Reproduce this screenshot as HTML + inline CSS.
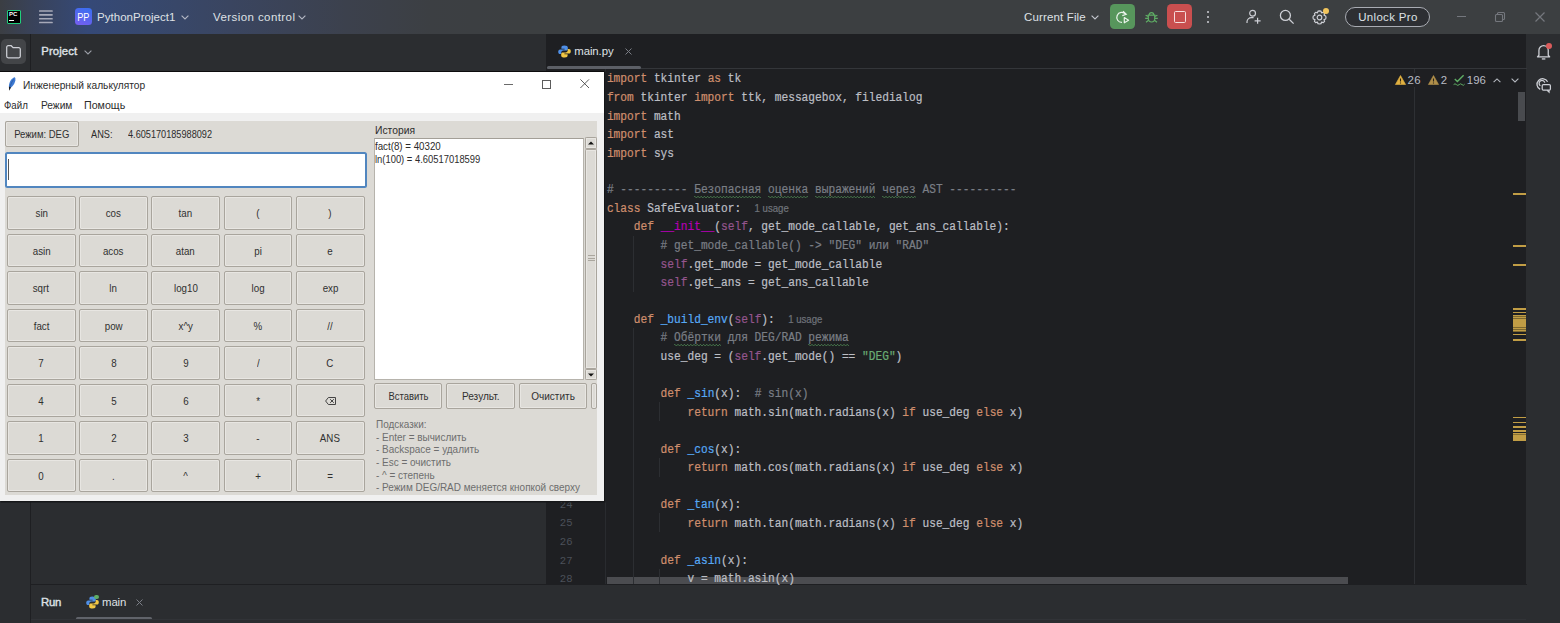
<!DOCTYPE html>
<html><head><meta charset="utf-8">
<style>
*{box-sizing:border-box;margin:0;padding:0}
html,body{width:1560px;height:623px;overflow:hidden;background:#2b2d30}
body{position:relative;font-family:"Liberation Sans",sans-serif;color:#dfe1e5}
.abs{position:absolute}
svg{position:absolute;overflow:visible}
/* ---------- IDE chrome ---------- */
#titlebar{left:0;top:0;width:1560px;height:34px;background:linear-gradient(90deg,#3b3e43 0px,#394258 30px,#354977 88px,#37486d 150px,#3a4560 230px,#3c414d 346px,#3c3f43 430px,#3c3f41 520px,#3c3f41 1560px)}
.tt{position:absolute;white-space:nowrap;font-size:12.4px;color:#dfe1e5;line-height:16px}
#leftstrip{left:0;top:34px;width:30px;height:589px;background:#2b2d30}
#leftsep{left:30px;top:34px;width:1px;height:589px;background:#1e1f22}
#project{left:31px;top:34px;width:516px;height:551px;background:#2b2d30}
#editor{left:546px;top:34px;width:980px;height:551px;background:#1e1f22}
#rightstrip{left:1526px;top:34px;width:34px;height:589px;background:#2b2d30}
#bottom{left:31px;top:584px;width:1496px;height:39px;background:#2b2d30;border-top:1px solid #1e1f22}
/* ---------- code ---------- */
#code{left:606.9px;top:69.9px;font-family:"Liberation Mono",monospace;font-size:11.19px;line-height:16.39px;color:#bcbec4;white-space:pre;transform:scale(1,1.13);transform-origin:0 0;-webkit-text-stroke:0.2px}
#code div{height:16.39px}
.k{color:#cf8e6d}.c{color:#7a7e85}.s{color:#6aab73}.f{color:#56a8f5}.sf{color:#94558d}.d{color:#b200b2}
.h{font-family:"Liberation Sans",sans-serif;font-size:9.6px;color:#6f737a}
.w{position:relative;display:inline-block}.wv{position:absolute;left:0;top:12.9px;width:100%;height:3px;overflow:hidden}
.ln{position:absolute;left:546px;width:26.5px;text-align:right;font-family:"Liberation Mono",monospace;font-size:10.6px;color:#4b5059;line-height:18.52px;height:18.52px}
.guide{position:absolute;width:1px;background:#2c2e32}
.mk{position:absolute;left:1513px;width:13px;height:2px;background:#c19d45}
</style></head><body>
<!--IDE-->
<div id="titlebar" class="abs"></div>
<div id="leftstrip" class="abs"></div>
<div id="leftsep" class="abs"></div>
<div id="project" class="abs"></div>
<div id="editor" class="abs"></div>
<div id="rightstrip" class="abs"></div>
<div id="bottom" class="abs"></div>
<!-- PyCharm logo -->
<div class="abs" style="left:6.7px;top:9.8px;width:13.9px;height:14.1px;background:#000;border:1.3px solid #20cf7c;border-radius:1px"></div>
<div class="abs" style="left:9.1px;top:11.3px;font-size:6px;font-weight:700;color:#fff;line-height:7px;letter-spacing:-0.2px">PC</div>
<div class="abs" style="left:9.2px;top:20px;width:4.4px;height:1.2px;background:#fff"></div>
<!-- hamburger -->
<svg style="left:39.3px;top:10px" width="14" height="14" viewBox="0 0 14 14"><g fill="#a6a9b8"><rect x="0" y="0.25" width="13.8" height="1.55" rx="0.6"/><rect x="0" y="4.1" width="13.8" height="1.55" rx="0.6"/><rect x="0" y="8.0" width="13.8" height="1.55" rx="0.6"/><rect x="0" y="11.7" width="13.8" height="1.55" rx="0.6"/></g></svg>
<!-- PP badge -->
<div class="abs" style="left:75px;top:8.2px;width:16.5px;height:16.8px;border-radius:3.5px;background:linear-gradient(200deg,#3a6ff2 5%,#5865ee 55%,#7a5ef0 100%)"></div>
<div class="abs" style="left:75px;top:11.8px;width:16.5px;text-align:center;font-size:10.6px;color:#fff;line-height:11px;letter-spacing:-0.1px;transform:scaleX(0.86)">PP</div>
<div class="tt" style="left:97px;top:9px;font-size:11.5px;letter-spacing:0.03px">PythonProject1</div>
<svg style="left:180.5px;top:14.5px" width="8" height="5" viewBox="0 0 8 5"><path d="M0.6 0.6 L4 4 L7.4 0.6" fill="none" stroke="#b4b8c4" stroke-width="1.1"/></svg>
<div class="tt" style="left:213px;top:9px;font-size:11.5px;letter-spacing:0.42px">Version control</div>
<svg style="left:298px;top:14.5px" width="8" height="5" viewBox="0 0 8 5"><path d="M0.6 0.6 L4 4 L7.4 0.6" fill="none" stroke="#b4b8c4" stroke-width="1.1"/></svg>
<!-- right side -->
<div class="tt" style="left:1024px;top:9px;font-size:11.5px;letter-spacing:0.15px">Current File</div>
<svg style="left:1091px;top:14.5px" width="8" height="5" viewBox="0 0 8 5"><path d="M0.6 0.6 L4 4 L7.4 0.6" fill="none" stroke="#c4c7ce" stroke-width="1.1"/></svg>
<div class="abs" style="left:1109.7px;top:4.2px;width:25.3px;height:25.3px;border-radius:4.5px;background:#57965c"></div>
<svg style="left:1114px;top:9px" width="17" height="16" viewBox="0 0 17 16"><path d="M11.6 5.2 A5 5 0 1 0 8 13.4" fill="none" stroke="#e9f3ea" stroke-width="1.25"/><path d="M9 2.2 L12.2 5.3 L8.3 6.6" fill="none" stroke="#e9f3ea" stroke-width="1.25"/><path d="M10.3 8.6 L14.6 11.2 L10.3 13.8 Z" fill="none" stroke="#e9f3ea" stroke-width="1.2" stroke-linejoin="round"/></svg>
<!-- bug -->
<svg style="left:1143.5px;top:10px" width="15" height="14" viewBox="0 0 15 14"><g fill="none" stroke="#5fad65" stroke-width="1.2"><path d="M4.3 5.2 h6.4 v3.6 a3.2 3.2 0 0 1 -6.4 0 Z"/><path d="M5.2 5 a2.3 2.3 0 0 1 4.6 0"/><path d="M4.3 6.4 L1.6 5.2 M4.3 8.3 H1.2 M4.6 10.3 L2 12.2 M10.7 6.4 L13.4 5.2 M10.7 8.3 H13.8 M10.4 10.3 L13 12.2"/></g></svg>
<!-- stop -->
<div class="abs" style="left:1167.2px;top:4.2px;width:25.2px;height:25.3px;border-radius:4.5px;background:#c94f4f"></div>
<div class="abs" style="left:1174px;top:11px;width:11.6px;height:11.6px;border:1.3px solid #f6dede;border-radius:1.6px"></div>
<!-- dots -->
<div class="abs" style="left:1207px;top:11px;width:2px;height:2px;border-radius:1px;background:#ced0d6"></div>
<div class="abs" style="left:1207px;top:16px;width:2px;height:2px;border-radius:1px;background:#ced0d6"></div>
<div class="abs" style="left:1207px;top:21px;width:2px;height:2px;border-radius:1px;background:#ced0d6"></div>
<!-- add user -->
<svg style="left:1246px;top:8.5px" width="16" height="16" viewBox="0 0 16 16"><g fill="none" stroke="#ced0d6" stroke-width="1.2"><circle cx="6.6" cy="4.2" r="2.9"/><path d="M1 14 v-1.2 a4.4 4.4 0 0 1 4.4 -4.2 h2.2"/><path d="M11.6 8.8 v6 M8.6 11.8 h6"/></g></svg>
<!-- search -->
<svg style="left:1278.6px;top:8.8px" width="16" height="16" viewBox="0 0 16 16"><g fill="none" stroke="#ced0d6" stroke-width="1.3"><circle cx="6.4" cy="6.4" r="5"/><path d="M10.2 10.2 L14.6 14.6"/></g></svg>
<!-- gear -->
<svg style="left:1312px;top:9.8px" width="15" height="15" viewBox="0 0 15 15"><g fill="none" stroke="#ced0d6" stroke-width="1.2"><path d="M7.5 0.9 L9 1.2 L9.6 2.9 L11.3 2.3 L12.6 3.6 L12 5.3 L13.7 6 L14 7.5 L13.7 9 L12 9.6 L12.6 11.3 L11.3 12.6 L9.6 12 L9 13.7 L7.5 14 L6 13.7 L5.4 12 L3.7 12.6 L2.4 11.3 L3 9.6 L1.3 9 L1 7.5 L1.3 6 L3 5.3 L2.4 3.6 L3.7 2.3 L5.4 2.9 L6 1.2 Z" stroke-linejoin="round"/><circle cx="7.5" cy="7.5" r="2.3"/></g></svg>
<div class="abs" style="left:1323px;top:8px;width:5.6px;height:5.6px;border-radius:3px;background:#f2c55c"></div>
<!-- Unlock Pro -->
<div class="abs" style="left:1345.4px;top:6.7px;width:84.4px;height:20.2px;border:1.5px solid #a9acb3;border-radius:10.1px;background:#2d2f33"></div>
<div class="tt" style="left:1358.2px;top:9px;font-size:11.5px;letter-spacing:0.32px;color:#dfe1e5">Unlock Pro</div>
<!-- window controls -->
<div class="abs" style="left:1456.5px;top:16px;width:9px;height:1.2px;background:#74777d"></div>
<svg style="left:1495px;top:12px" width="10" height="10" viewBox="0 0 10 10"><g fill="none" stroke="#74777d" stroke-width="1.1"><rect x="0.5" y="2.5" width="7" height="7" rx="1"/><path d="M2.5 2.5 V1.5 a1 1 0 0 1 1 -1 H8.5 a1 1 0 0 1 1 1 V6.5 a1 1 0 0 1 -1 1 H7.5"/></g></svg>
<svg style="left:1534.6px;top:12px" width="10" height="10" viewBox="0 0 10 10"><path d="M0.5 0.5 L9.5 9.5 M9.5 0.5 L0.5 9.5" fill="none" stroke="#74777d" stroke-width="1.2"/></svg>
<!--TITLEBAR-END-->
<!-- left strip folder tile -->
<div class="abs" style="left:1.2px;top:38.8px;width:25px;height:25px;border-radius:5px;background:#434548"></div>
<svg style="left:6.2px;top:44.6px" width="15" height="14" viewBox="0 0 15 14"><path d="M0.7 2.2 a1.5 1.5 0 0 1 1.5 -1.5 h3 l1.9 2 h5.7 a1.5 1.5 0 0 1 1.5 1.5 v7.1 a1.5 1.5 0 0 1 -1.5 1.5 h-10.6 a1.5 1.5 0 0 1 -1.5 -1.5 Z" fill="none" stroke="#ced0d6" stroke-width="1.25"/></svg>
<!-- Project header -->
<div class="tt" style="left:41.3px;top:43.2px;font-size:11.3px;font-weight:400;-webkit-text-stroke:0.4px;letter-spacing:0.12px;color:#dfe1e5">Project</div>
<svg style="left:83.8px;top:50px" width="8" height="5" viewBox="0 0 8 5"><path d="M0.6 0.6 L4 4 L7.4 0.6" fill="none" stroke="#9da0a8" stroke-width="1.1"/></svg>
<!-- editor tabs -->
<div class="abs" style="left:547px;top:68px;width:980px;height:1px;background:#34363a"></div>
<svg style="left:557.5px;top:44.6px" width="13" height="13" viewBox="0 0 13 13"><path d="M6.3 0.4 c-2.2 0 -2.9 0.9 -2.9 2 v1.4 h3.2 v0.6 h-4.5 c-1.2 0 -1.9 1 -1.9 2.4 c0 1.5 0.7 2.3 1.9 2.3 h1.2 v-1.7 c0 -1.1 0.9 -1.9 2 -1.9 h2.9 c0.9 0 1.6 -0.7 1.6 -1.6 v-1.6 c0 -1.1 -1 -1.9 -3.5 -1.9 Z" fill="#4f8fe6"/><path d="M6.7 12.6 c2.2 0 2.9 -0.9 2.9 -2 v-1.4 h-3.2 v-0.6 h4.5 c1.2 0 1.9 -1 1.9 -2.4 c0 -1.5 -0.7 -2.3 -1.9 -2.3 h-1.2 v1.7 c0 1.1 -0.9 1.9 -2 1.9 h-2.9 c-0.9 0 -1.6 0.7 -1.6 1.6 v1.6 c0 1.1 1 1.9 3.5 1.9 Z" fill="#f2c744"/></svg>
<div class="tt" style="left:574.3px;top:43.3px;font-size:11.4px;letter-spacing:-0.1px;color:#dfe1e5">main.py</div>
<svg style="left:624.5px;top:47.5px" width="7" height="7" viewBox="0 0 7 7"><path d="M0.5 0.5 L6.5 6.5 M6.5 0.5 L0.5 6.5" fill="none" stroke="#7b7e86" stroke-width="1"/></svg>
<div class="abs" style="left:547px;top:65.5px;width:94px;height:3.2px;border-radius:1.6px;background:#5c5f66"></div>
<!-- inspections widget -->
<svg style="left:1395px;top:74.5px" width="11" height="10" viewBox="0 0 11 10"><path d="M5.5 0.5 L10.6 9.5 H0.4 Z" fill="#e0b040" stroke="#e0b040" stroke-width="0.6" stroke-linejoin="round"/><path d="M5.5 3.4 V6.4 M5.5 7.5 V8.4" stroke="#2a2418" stroke-width="1.1"/></svg>
<div class="tt" style="left:1407.6px;top:72.2px;font-size:11.4px;letter-spacing:0.4px;color:#b9bcc4">26</div>
<svg style="left:1428.3px;top:74.5px" width="11" height="10" viewBox="0 0 11 10"><path d="M5.5 0.5 L10.6 9.5 H0.4 Z" fill="#b08f4a" stroke="#b08f4a" stroke-width="0.6" stroke-linejoin="round"/><path d="M5.5 3.4 V6.4 M5.5 7.5 V8.4" stroke="#2a2418" stroke-width="1.1"/></svg>
<div class="tt" style="left:1440.8px;top:72.2px;font-size:11.4px;color:#b9bcc4">2</div>
<svg style="left:1453px;top:74px" width="12" height="12" viewBox="0 0 12 12"><path d="M1.8 5 L4.4 7.6 L10.6 1.2" fill="none" stroke="#5fad65" stroke-width="1.4"/><path d="M0.6 10.6 q1.4 -1.6 2.8 0 t2.8 0 t2.8 0 t2.6 -0.4" fill="none" stroke="#5fad65" stroke-width="1"/></svg>
<div class="tt" style="left:1466.8px;top:72.2px;font-size:11.4px;color:#b9bcc4">196</div>
<svg style="left:1493.3px;top:77.5px" width="8" height="5" viewBox="0 0 8 5"><path d="M0.6 4.2 L4 0.9 L7.4 4.2" fill="none" stroke="#b4b8bf" stroke-width="1.1"/></svg>
<svg style="left:1511.2px;top:77.8px" width="8" height="5" viewBox="0 0 8 5"><path d="M0.6 0.7 L4 4 L7.4 0.7" fill="none" stroke="#b4b8bf" stroke-width="1.1"/></svg>
<!-- margin guide -->
<div class="abs" style="left:1414px;top:87px;width:1px;height:497px;background:#2e3034"></div>
<div class="abs" style="left:1414px;top:69px;width:1px;height:4px;background:#2e3034"></div>
<!-- v scrollbar thumb -->
<div class="abs" style="left:1518px;top:92px;width:7px;height:29px;background:#494b4f"></div>
<!-- error stripe marks -->
<div class="mk" style="top:192.6px"></div><div class="mk" style="top:244.6px"></div><div class="mk" style="top:263.6px"></div>
<div class="mk" style="top:308px;height:1.6px"></div><div class="mk" style="top:311.6px;height:1.6px"></div>
<div class="mk" style="top:315.2px;height:16.6px;background:repeating-linear-gradient(180deg,#c19d45 0px,#c19d45 1.4px,#7d682f 1.4px,#7d682f 2.1px)"></div>
<div class="mk" style="top:333.6px;height:1.8px"></div><div class="mk" style="top:339.2px;height:1.8px"></div>
<div class="mk" style="top:416.8px;height:1.6px"></div><div class="mk" style="top:421.6px;height:1.8px"></div><div class="mk" style="top:425.8px;height:1.8px"></div><div class="mk" style="top:429.8px;height:1.8px"></div>
<div class="mk" style="top:433.4px;height:8px;background:repeating-linear-gradient(180deg,#c19d45 0px,#c19d45 1.5px,#8a7233 1.5px,#8a7233 2.1px)"></div>
<!-- gutter separator + h scrollbar -->
<div class="abs" style="left:604.6px;top:69px;width:1px;height:515px;background:#292b2f"></div>
<div class="abs" style="left:607.3px;top:576.5px;width:741px;height:7.6px;background:rgba(120,122,126,0.5)"></div>
<!-- right strip icons -->
<svg style="left:1535.6px;top:42.6px" width="15.6" height="17.6" viewBox="0 0 15 17"><g fill="none" stroke="#ced0d6" stroke-width="1.25"><path d="M2.8 11.8 V7 a4.5 4.5 0 0 1 9 0 v4.8 l1.4 1.6 H1.4 Z" stroke-linejoin="round"/><path d="M5.6 15.4 h3.4"/></g></svg>
<div class="abs" style="left:1546.2px;top:43.2px;width:6px;height:6px;border-radius:3px;background:#db5c5c"></div>
<svg style="left:1535.4px;top:76.8px" width="17" height="16" viewBox="0 0 17 16"><g fill="none" stroke="#ced0d6" stroke-width="1.25"><path d="M5.2 12.4 a5.6 5.6 0 1 1 7.4 -7.6"/><path d="M5.4 8.8 a2.9 2.9 0 1 1 4.4 -3.2"/><rect x="7.2" y="7.6" width="8.2" height="5.6" rx="1.2"/><path d="M12.2 13.2 l1.8 1.8 v-1.8"/></g></svg>
<!-- Run bar -->
<div class="tt" style="left:41px;top:594.2px;font-size:11.4px;font-weight:400;-webkit-text-stroke:0.4px;letter-spacing:-0.3px">Run</div>
<svg style="left:85.6px;top:595.6px" width="13" height="13" viewBox="0 0 13 13"><path d="M6.3 0.4 c-2.2 0 -2.9 0.9 -2.9 2 v1.4 h3.2 v0.6 h-4.5 c-1.2 0 -1.9 1 -1.9 2.4 c0 1.5 0.7 2.3 1.9 2.3 h1.2 v-1.7 c0 -1.1 0.9 -1.9 2 -1.9 h2.9 c0.9 0 1.6 -0.7 1.6 -1.6 v-1.6 c0 -1.1 -1 -1.9 -3.5 -1.9 Z" fill="#4f8fe6"/><path d="M6.7 12.6 c2.2 0 2.9 -0.9 2.9 -2 v-1.4 h-3.2 v-0.6 h4.5 c1.2 0 1.9 -1 1.9 -2.4 c0 -1.5 -0.7 -2.3 -1.9 -2.3 h-1.2 v1.7 c0 1.1 -0.9 1.9 -2 1.9 h-2.9 c-0.9 0 -1.6 0.7 -1.6 1.6 v1.6 c0 1.1 1 1.9 3.5 1.9 Z" fill="#f2c744"/></svg>
<div class="abs" style="left:94.2px;top:594.6px;width:4.6px;height:4.6px;border-radius:2.3px;background:#5fad65"></div>
<div class="tt" style="left:102px;top:594.2px;font-size:11.4px;letter-spacing:-0.1px">main</div>
<svg style="left:136.2px;top:599px" width="7" height="7" viewBox="0 0 7 7"><path d="M0.5 0.5 L6.5 6.5 M6.5 0.5 L0.5 6.5" fill="none" stroke="#7b7e86" stroke-width="1"/></svg>
<div class="abs" style="left:75.5px;top:617px;width:76.5px;height:3px;border-radius:1.5px;background:#60636a"></div>
<div class="abs" style="left:31px;top:619px;width:1495px;height:1px;background:#313337"></div>
<!-- line numbers -->
<div class="ln" style="top:495.9px">24</div><div class="ln" style="top:514.4px">25</div><div class="ln" style="top:532.9px">26</div><div class="ln" style="top:551.5px">27</div><div class="ln" style="top:570.0px">28</div>
<!--EDITOR-END-->
<!-- indent guides -->
<div class="guide" style="left:632.5px;top:236px;height:56px"></div>
<div class="guide" style="left:632.5px;top:328px;height:256px"></div>
<div class="guide" style="left:659.4px;top:402px;height:19px"></div>
<div class="guide" style="left:659.4px;top:458px;height:19px"></div>
<div class="guide" style="left:659.4px;top:513px;height:19px"></div>
<div class="guide" style="left:659.4px;top:569px;height:15px"></div>
<div id="code" class="abs"><div><span class="k">import</span> tkinter <span class="k">as</span> tk</div><div><span class="k">from</span> tkinter <span class="k">import</span> ttk, messagebox, filedialog</div><div><span class="k">import</span> math</div><div><span class="k">import</span> ast</div><div><span class="k">import</span> sys</div><div> </div><div><span class="c"># ---------- <span class="w">Безопасная<svg class="wv" height="3"><path d="M0 1.5 q0.8 -1.5 1.6 0 t1.6 0 q0.8 -1.5 1.6 0 t1.6 0 q0.8 -1.5 1.6 0 t1.6 0 q0.8 -1.5 1.6 0 t1.6 0 q0.8 -1.5 1.6 0 t1.6 0 q0.8 -1.5 1.6 0 t1.6 0 q0.8 -1.5 1.6 0 t1.6 0 q0.8 -1.5 1.6 0 t1.6 0 q0.8 -1.5 1.6 0 t1.6 0 q0.8 -1.5 1.6 0 t1.6 0 q0.8 -1.5 1.6 0 t1.6 0 q0.8 -1.5 1.6 0 t1.6 0 q0.8 -1.5 1.6 0 t1.6 0 q0.8 -1.5 1.6 0 t1.6 0 q0.8 -1.5 1.6 0 t1.6 0 q0.8 -1.5 1.6 0 t1.6 0 q0.8 -1.5 1.6 0 t1.6 0 q0.8 -1.5 1.6 0 t1.6 0 q0.8 -1.5 1.6 0 t1.6 0 q0.8 -1.5 1.6 0 t1.6 0 q0.8 -1.5 1.6 0 t1.6 0 q0.8 -1.5 1.6 0 t1.6 0 q0.8 -1.5 1.6 0 t1.6 0 q0.8 -1.5 1.6 0 t1.6 0" fill="none" stroke="#56975c" stroke-width="0.7"/></svg></span> <span class="w">оценка<svg class="wv" height="3"><path d="M0 1.5 q0.8 -1.5 1.6 0 t1.6 0 q0.8 -1.5 1.6 0 t1.6 0 q0.8 -1.5 1.6 0 t1.6 0 q0.8 -1.5 1.6 0 t1.6 0 q0.8 -1.5 1.6 0 t1.6 0 q0.8 -1.5 1.6 0 t1.6 0 q0.8 -1.5 1.6 0 t1.6 0 q0.8 -1.5 1.6 0 t1.6 0 q0.8 -1.5 1.6 0 t1.6 0 q0.8 -1.5 1.6 0 t1.6 0 q0.8 -1.5 1.6 0 t1.6 0 q0.8 -1.5 1.6 0 t1.6 0 q0.8 -1.5 1.6 0 t1.6 0 q0.8 -1.5 1.6 0 t1.6 0 q0.8 -1.5 1.6 0 t1.6 0 q0.8 -1.5 1.6 0 t1.6 0 q0.8 -1.5 1.6 0 t1.6 0 q0.8 -1.5 1.6 0 t1.6 0 q0.8 -1.5 1.6 0 t1.6 0 q0.8 -1.5 1.6 0 t1.6 0 q0.8 -1.5 1.6 0 t1.6 0 q0.8 -1.5 1.6 0 t1.6 0 q0.8 -1.5 1.6 0 t1.6 0 q0.8 -1.5 1.6 0 t1.6 0" fill="none" stroke="#56975c" stroke-width="0.7"/></svg></span> <span class="w">выражений<svg class="wv" height="3"><path d="M0 1.5 q0.8 -1.5 1.6 0 t1.6 0 q0.8 -1.5 1.6 0 t1.6 0 q0.8 -1.5 1.6 0 t1.6 0 q0.8 -1.5 1.6 0 t1.6 0 q0.8 -1.5 1.6 0 t1.6 0 q0.8 -1.5 1.6 0 t1.6 0 q0.8 -1.5 1.6 0 t1.6 0 q0.8 -1.5 1.6 0 t1.6 0 q0.8 -1.5 1.6 0 t1.6 0 q0.8 -1.5 1.6 0 t1.6 0 q0.8 -1.5 1.6 0 t1.6 0 q0.8 -1.5 1.6 0 t1.6 0 q0.8 -1.5 1.6 0 t1.6 0 q0.8 -1.5 1.6 0 t1.6 0 q0.8 -1.5 1.6 0 t1.6 0 q0.8 -1.5 1.6 0 t1.6 0 q0.8 -1.5 1.6 0 t1.6 0 q0.8 -1.5 1.6 0 t1.6 0 q0.8 -1.5 1.6 0 t1.6 0 q0.8 -1.5 1.6 0 t1.6 0 q0.8 -1.5 1.6 0 t1.6 0 q0.8 -1.5 1.6 0 t1.6 0 q0.8 -1.5 1.6 0 t1.6 0 q0.8 -1.5 1.6 0 t1.6 0" fill="none" stroke="#56975c" stroke-width="0.7"/></svg></span> <span class="w">через<svg class="wv" height="3"><path d="M0 1.5 q0.8 -1.5 1.6 0 t1.6 0 q0.8 -1.5 1.6 0 t1.6 0 q0.8 -1.5 1.6 0 t1.6 0 q0.8 -1.5 1.6 0 t1.6 0 q0.8 -1.5 1.6 0 t1.6 0 q0.8 -1.5 1.6 0 t1.6 0 q0.8 -1.5 1.6 0 t1.6 0 q0.8 -1.5 1.6 0 t1.6 0 q0.8 -1.5 1.6 0 t1.6 0 q0.8 -1.5 1.6 0 t1.6 0 q0.8 -1.5 1.6 0 t1.6 0 q0.8 -1.5 1.6 0 t1.6 0 q0.8 -1.5 1.6 0 t1.6 0 q0.8 -1.5 1.6 0 t1.6 0 q0.8 -1.5 1.6 0 t1.6 0 q0.8 -1.5 1.6 0 t1.6 0 q0.8 -1.5 1.6 0 t1.6 0 q0.8 -1.5 1.6 0 t1.6 0 q0.8 -1.5 1.6 0 t1.6 0 q0.8 -1.5 1.6 0 t1.6 0 q0.8 -1.5 1.6 0 t1.6 0 q0.8 -1.5 1.6 0 t1.6 0 q0.8 -1.5 1.6 0 t1.6 0 q0.8 -1.5 1.6 0 t1.6 0" fill="none" stroke="#56975c" stroke-width="0.7"/></svg></span> AST ----------</span></div><div><span class="k">class</span> SafeEvaluator:  <span class="h">1 usage</span></div><div>    <span class="k">def</span> <span class="d">__init__</span>(<span class="sf">self</span>, get_mode_callable, get_ans_callable):</div><div>        <span class="c"># get_mode_callable() -&gt; "DEG" или "RAD"</span></div><div>        <span class="sf">self</span>.get_mode = get_mode_callable</div><div>        <span class="sf">self</span>.get_ans = get_ans_callable</div><div> </div><div>    <span class="k">def</span> <span class="f">_build_env</span>(<span class="sf">self</span>):  <span class="h">1 usage</span></div><div>        <span class="c"># <span class="w">Обёртки<svg class="wv" height="3"><path d="M0 1.5 q0.8 -1.5 1.6 0 t1.6 0 q0.8 -1.5 1.6 0 t1.6 0 q0.8 -1.5 1.6 0 t1.6 0 q0.8 -1.5 1.6 0 t1.6 0 q0.8 -1.5 1.6 0 t1.6 0 q0.8 -1.5 1.6 0 t1.6 0 q0.8 -1.5 1.6 0 t1.6 0 q0.8 -1.5 1.6 0 t1.6 0 q0.8 -1.5 1.6 0 t1.6 0 q0.8 -1.5 1.6 0 t1.6 0 q0.8 -1.5 1.6 0 t1.6 0 q0.8 -1.5 1.6 0 t1.6 0 q0.8 -1.5 1.6 0 t1.6 0 q0.8 -1.5 1.6 0 t1.6 0 q0.8 -1.5 1.6 0 t1.6 0 q0.8 -1.5 1.6 0 t1.6 0 q0.8 -1.5 1.6 0 t1.6 0 q0.8 -1.5 1.6 0 t1.6 0 q0.8 -1.5 1.6 0 t1.6 0 q0.8 -1.5 1.6 0 t1.6 0 q0.8 -1.5 1.6 0 t1.6 0 q0.8 -1.5 1.6 0 t1.6 0 q0.8 -1.5 1.6 0 t1.6 0 q0.8 -1.5 1.6 0 t1.6 0" fill="none" stroke="#56975c" stroke-width="0.7"/></svg></span> для DEG/RAD <span class="w">режима<svg class="wv" height="3"><path d="M0 1.5 q0.8 -1.5 1.6 0 t1.6 0 q0.8 -1.5 1.6 0 t1.6 0 q0.8 -1.5 1.6 0 t1.6 0 q0.8 -1.5 1.6 0 t1.6 0 q0.8 -1.5 1.6 0 t1.6 0 q0.8 -1.5 1.6 0 t1.6 0 q0.8 -1.5 1.6 0 t1.6 0 q0.8 -1.5 1.6 0 t1.6 0 q0.8 -1.5 1.6 0 t1.6 0 q0.8 -1.5 1.6 0 t1.6 0 q0.8 -1.5 1.6 0 t1.6 0 q0.8 -1.5 1.6 0 t1.6 0 q0.8 -1.5 1.6 0 t1.6 0 q0.8 -1.5 1.6 0 t1.6 0 q0.8 -1.5 1.6 0 t1.6 0 q0.8 -1.5 1.6 0 t1.6 0 q0.8 -1.5 1.6 0 t1.6 0 q0.8 -1.5 1.6 0 t1.6 0 q0.8 -1.5 1.6 0 t1.6 0 q0.8 -1.5 1.6 0 t1.6 0 q0.8 -1.5 1.6 0 t1.6 0 q0.8 -1.5 1.6 0 t1.6 0 q0.8 -1.5 1.6 0 t1.6 0 q0.8 -1.5 1.6 0 t1.6 0" fill="none" stroke="#56975c" stroke-width="0.7"/></svg></span></span></div><div>        use_deg = (<span class="sf">self</span>.get_mode() == <span class="s">"DEG"</span>)</div><div> </div><div>        <span class="k">def</span> <span class="f">_sin</span>(x):  <span class="c"># sin(x)</span></div><div>            <span class="k">return</span> math.sin(math.radians(x) <span class="k">if</span> use_deg <span class="k">else</span> x)</div><div> </div><div>        <span class="k">def</span> <span class="f">_cos</span>(x):</div><div>            <span class="k">return</span> math.cos(math.radians(x) <span class="k">if</span> use_deg <span class="k">else</span> x)</div><div> </div><div>        <span class="k">def</span> <span class="f">_tan</span>(x):</div><div>            <span class="k">return</span> math.tan(math.radians(x) <span class="k">if</span> use_deg <span class="k">else</span> x)</div><div> </div><div>        <span class="k">def</span> <span class="f">_asin</span>(x):</div><div>            v = math.asin(x)</div></div>
<!--CODE-END-->
<!--CALC-START--><style>
#calc{left:0;top:70.6px;width:604px;height:430.8px;background:#f0f0f0;border-top:1px solid #0c0c0d;box-shadow:1px 1px 0 0.5px #151618;font-family:"Liberation Sans",sans-serif;color:#222;font-size:10.6px}
#calc .t{position:absolute;white-space:nowrap;line-height:12px;color:#2c2c2c;transform-origin:0 50%}
.b{position:absolute;background:#dcdad5;border:1px solid #a9a59d;border-radius:2px;box-shadow:inset 0 0 0 1px #e8e6e2;text-align:center;color:#303030;white-space:nowrap}
</style>
<div id="calc" class="abs">
<div class="abs" style="left:0;top:0;width:604px;height:41.5px;background:#fff"></div>
<svg style="left:8px;top:5.6px" width="8" height="14" viewBox="0 0 8 14"><path d="M6.9 0.3 C4 0.9 1.3 4.4 0.9 9 L1.3 11.3 C4.3 10.5 6.7 7 7.4 3.3 C7.6 2 7.4 1 6.9 0.3 Z" fill="#3d7ad2"/><path d="M5.6 2.4 C4 4.6 2.6 7.4 1.9 10.4" stroke="#27559e" stroke-width="0.8" fill="none"/><path d="M0.9 9.4 L1.2 13.7 L3 10.6 Z" fill="#151a24"/></svg>
<div class="t" style="left:22.8px;top:7.6px;transform:scaleX(0.961);">Инженерный калькулятор</div>
<div class="abs" style="left:504px;top:12px;width:9px;height:1px;background:#6a6a6a"></div>
<div class="abs" style="left:541.6px;top:8px;width:9px;height:9px;border:1px solid #5c5c5c"></div>
<svg style="left:580.2px;top:7.8px" width="9.4" height="9.4" viewBox="0 0 10 10"><path d="M0.4 0.4 L9.6 9.6 M9.6 0.4 L0.4 9.6" stroke="#484848" stroke-width="0.95" fill="none"/></svg>
<div class="t" style="left:4.2px;top:27.8px;transform:scaleX(0.914);">Файл</div>
<div class="t" style="left:40.8px;top:27.8px;transform:scaleX(0.958);">Режим</div>
<div class="t" style="left:84px;top:27.8px;transform:scaleX(1.007);">Помощь</div>
<div class="abs" style="left:5px;top:49.6px;width:592.3px;height:373.4px;background:#dcdad5"></div>
<div class="b" style="left:5.4px;top:49.8px;width:73.3px;height:27.6px;line-height:25.6px;height:25.6px;"><span style="display:inline-block;transform:scaleX(0.897)">Режим: DEG</span></div>
<div class="t" style="left:90.8px;top:56.6px;transform:scaleX(0.869);">ANS:</div>
<div class="t" style="left:127.8px;top:56.6px;transform:scaleX(0.864);">4.605170185988092</div>
<div class="abs" style="left:5.2px;top:80.8px;width:362px;height:35.2px;background:#fff;border:2px solid #5186bf;border-radius:2.5px"></div>
<div class="abs" style="left:8px;top:87.5px;width:1px;height:21px;background:#555"></div>
<div class="b" style="left:6.9px;top:124.6px;width:68.8px;height:35.1px;line-height:33.1px;height:33.5px;"><span style="display:inline-block;transform:scaleX(0.920)">sin</span></div><div class="b" style="left:79.1px;top:124.6px;width:68.8px;height:35.1px;line-height:33.1px;height:33.5px;"><span style="display:inline-block;transform:scaleX(0.920)">cos</span></div><div class="b" style="left:151.3px;top:124.6px;width:68.8px;height:35.1px;line-height:33.1px;height:33.5px;"><span style="display:inline-block;transform:scaleX(0.920)">tan</span></div><div class="b" style="left:223.6px;top:124.6px;width:68.8px;height:35.1px;line-height:33.1px;height:33.5px;"><span style="display:inline-block;transform:scaleX(0.920)">(</span></div><div class="b" style="left:295.8px;top:124.6px;width:68.8px;height:35.1px;line-height:33.1px;height:33.5px;"><span style="display:inline-block;transform:scaleX(0.920)">)</span></div>
<div class="b" style="left:6.9px;top:162.1px;width:68.8px;height:35.1px;line-height:33.1px;height:33.5px;"><span style="display:inline-block;transform:scaleX(0.920)">asin</span></div><div class="b" style="left:79.1px;top:162.1px;width:68.8px;height:35.1px;line-height:33.1px;height:33.5px;"><span style="display:inline-block;transform:scaleX(0.920)">acos</span></div><div class="b" style="left:151.3px;top:162.1px;width:68.8px;height:35.1px;line-height:33.1px;height:33.5px;"><span style="display:inline-block;transform:scaleX(0.920)">atan</span></div><div class="b" style="left:223.6px;top:162.1px;width:68.8px;height:35.1px;line-height:33.1px;height:33.5px;"><span style="display:inline-block;transform:scaleX(0.920)">pi</span></div><div class="b" style="left:295.8px;top:162.1px;width:68.8px;height:35.1px;line-height:33.1px;height:33.5px;"><span style="display:inline-block;transform:scaleX(0.920)">e</span></div>
<div class="b" style="left:6.9px;top:199.6px;width:68.8px;height:35.1px;line-height:33.1px;height:33.5px;"><span style="display:inline-block;transform:scaleX(0.920)">sqrt</span></div><div class="b" style="left:79.1px;top:199.6px;width:68.8px;height:35.1px;line-height:33.1px;height:33.5px;"><span style="display:inline-block;transform:scaleX(0.920)">ln</span></div><div class="b" style="left:151.3px;top:199.6px;width:68.8px;height:35.1px;line-height:33.1px;height:33.5px;"><span style="display:inline-block;transform:scaleX(0.920)">log10</span></div><div class="b" style="left:223.6px;top:199.6px;width:68.8px;height:35.1px;line-height:33.1px;height:33.5px;"><span style="display:inline-block;transform:scaleX(0.920)">log</span></div><div class="b" style="left:295.8px;top:199.6px;width:68.8px;height:35.1px;line-height:33.1px;height:33.5px;"><span style="display:inline-block;transform:scaleX(0.920)">exp</span></div>
<div class="b" style="left:6.9px;top:237.2px;width:68.8px;height:35.1px;line-height:33.1px;height:33.5px;"><span style="display:inline-block;transform:scaleX(0.920)">fact</span></div><div class="b" style="left:79.1px;top:237.2px;width:68.8px;height:35.1px;line-height:33.1px;height:33.5px;"><span style="display:inline-block;transform:scaleX(0.920)">pow</span></div><div class="b" style="left:151.3px;top:237.2px;width:68.8px;height:35.1px;line-height:33.1px;height:33.5px;"><span style="display:inline-block;transform:scaleX(0.920)">x^y</span></div><div class="b" style="left:223.6px;top:237.2px;width:68.8px;height:35.1px;line-height:33.1px;height:33.5px;"><span style="display:inline-block;transform:scaleX(0.920)">%</span></div><div class="b" style="left:295.8px;top:237.2px;width:68.8px;height:35.1px;line-height:33.1px;height:33.5px;"><span style="display:inline-block;transform:scaleX(0.920)">//</span></div>
<div class="b" style="left:6.9px;top:274.7px;width:68.8px;height:35.1px;line-height:33.1px;height:33.5px;"><span style="display:inline-block;transform:scaleX(0.920)">7</span></div><div class="b" style="left:79.1px;top:274.7px;width:68.8px;height:35.1px;line-height:33.1px;height:33.5px;"><span style="display:inline-block;transform:scaleX(0.920)">8</span></div><div class="b" style="left:151.3px;top:274.7px;width:68.8px;height:35.1px;line-height:33.1px;height:33.5px;"><span style="display:inline-block;transform:scaleX(0.920)">9</span></div><div class="b" style="left:223.6px;top:274.7px;width:68.8px;height:35.1px;line-height:33.1px;height:33.5px;"><span style="display:inline-block;transform:scaleX(0.920)">/</span></div><div class="b" style="left:295.8px;top:274.7px;width:68.8px;height:35.1px;line-height:33.1px;height:33.5px;"><span style="display:inline-block;transform:scaleX(0.920)">C</span></div>
<div class="b" style="left:6.9px;top:312.2px;width:68.8px;height:35.1px;line-height:33.1px;height:33.5px;"><span style="display:inline-block;transform:scaleX(0.920)">4</span></div><div class="b" style="left:79.1px;top:312.2px;width:68.8px;height:35.1px;line-height:33.1px;height:33.5px;"><span style="display:inline-block;transform:scaleX(0.920)">5</span></div><div class="b" style="left:151.3px;top:312.2px;width:68.8px;height:35.1px;line-height:33.1px;height:33.5px;"><span style="display:inline-block;transform:scaleX(0.920)">6</span></div><div class="b" style="left:223.6px;top:312.2px;width:68.8px;height:35.1px;line-height:33.1px;height:33.5px;"><span style="display:inline-block;transform:scaleX(0.920)">*</span></div><div class="b" style="left:295.8px;top:312.2px;width:68.8px;height:33.5px;line-height:31.5px;"><span style="display:inline-block;transform:scaleX(0.920)"></span></div><svg style="left:325.0px;top:325.4px" width="11" height="8" viewBox="0 0 11 8"><path d="M3.4 0.5 H10.5 V7.5 H3.4 L0.6 4 Z" fill="none" stroke="#333" stroke-width="0.9"/><path d="M5.2 2.2 L8.8 5.8 M8.8 2.2 L5.2 5.8" stroke="#333" stroke-width="0.9"/></svg>
<div class="b" style="left:6.9px;top:349.7px;width:68.8px;height:35.1px;line-height:33.1px;height:33.5px;"><span style="display:inline-block;transform:scaleX(0.920)">1</span></div><div class="b" style="left:79.1px;top:349.7px;width:68.8px;height:35.1px;line-height:33.1px;height:33.5px;"><span style="display:inline-block;transform:scaleX(0.920)">2</span></div><div class="b" style="left:151.3px;top:349.7px;width:68.8px;height:35.1px;line-height:33.1px;height:33.5px;"><span style="display:inline-block;transform:scaleX(0.920)">3</span></div><div class="b" style="left:223.6px;top:349.7px;width:68.8px;height:35.1px;line-height:33.1px;height:33.5px;"><span style="display:inline-block;transform:scaleX(0.920)">-</span></div><div class="b" style="left:295.8px;top:349.7px;width:68.8px;height:35.1px;line-height:33.1px;height:33.5px;"><span style="display:inline-block;transform:scaleX(0.920)">ANS</span></div>
<div class="b" style="left:6.9px;top:387.2px;width:68.8px;height:35.1px;line-height:33.1px;height:33.5px;"><span style="display:inline-block;transform:scaleX(0.920)">0</span></div><div class="b" style="left:79.1px;top:387.2px;width:68.8px;height:35.1px;line-height:33.1px;height:33.5px;"><span style="display:inline-block;transform:scaleX(0.920)">.</span></div><div class="b" style="left:151.3px;top:387.2px;width:68.8px;height:35.1px;line-height:33.1px;height:33.5px;"><span style="display:inline-block;transform:scaleX(0.920)">^</span></div><div class="b" style="left:223.6px;top:387.2px;width:68.8px;height:35.1px;line-height:33.1px;height:33.5px;"><span style="display:inline-block;transform:scaleX(0.920)">+</span></div><div class="b" style="left:295.8px;top:387.2px;width:68.8px;height:35.1px;line-height:33.1px;height:33.5px;"><span style="display:inline-block;transform:scaleX(0.920)">=</span></div>
<div class="t" style="left:374.8px;top:52.2px;transform:scaleX(0.973);">История</div>
<div class="abs" style="left:373.8px;top:66.8px;width:210.6px;height:242px;background:#fff;border:1px solid #b6b3ac;border-top-color:#a39f97"></div>
<div class="t" style="left:375.1px;top:68.8px;transform:scaleX(0.919);">fact(8) = 40320</div>
<div class="t" style="left:375.1px;top:81.4px;transform:scaleX(0.887);">ln(100) = 4.60517018599</div>
<div class="abs" style="left:585.3px;top:65.8px;width:12px;height:243px;background:#c9c6bf"></div>
<div class="b" style="left:585.3px;top:65.8px;width:12px;height:11.4px;border-radius:1.5px"></div>
<svg style="left:588.4px;top:69.6px" width="6" height="4" viewBox="0 0 6 4"><path d="M0 3.6 L3 0.4 L6 3.6 Z" fill="#111"/></svg>
<div class="b" style="left:585.3px;top:77.6px;width:12px;height:219.6px;border-radius:1.5px"></div>
<div class="abs" style="left:588.4px;top:183.6px;width:6.2px;height:1px;background:#aaa69e"></div><div class="abs" style="left:588.4px;top:186.2px;width:6.2px;height:1px;background:#aaa69e"></div><div class="abs" style="left:588.4px;top:188.8px;width:6.2px;height:1px;background:#aaa69e"></div>
<div class="b" style="left:585.3px;top:297px;width:12px;height:11.8px;border-radius:1.5px"></div>
<svg style="left:588.3px;top:301.2px" width="6" height="4" viewBox="0 0 6 4"><path d="M0 0.4 L3 3.6 L6 0.4 Z" fill="#111"/></svg>
<div class="b" style="left:373.8px;top:311.8px;width:68.4px;height:27.4px;line-height:25.4px;height:25.4px;"><span style="display:inline-block;transform:scaleX(0.891)">Вставить</span></div><div class="b" style="left:446.2px;top:311.8px;width:68.4px;height:27.4px;line-height:25.4px;height:25.4px;"><span style="display:inline-block;transform:scaleX(0.953)">Результ.</span></div><div class="b" style="left:518.6px;top:311.8px;width:68.4px;height:27.4px;line-height:25.4px;height:25.4px;"><span style="display:inline-block;transform:scaleX(0.945)">Очистить</span></div><div class="b" style="left:591px;top:311.8px;width:6.4px;height:25.4px;border-radius:2px"></div>
<div class="t" style="left:375.8px;top:346.4px;line-height:12.66px;color:#6e6e6e;white-space:pre;transform:scaleX(0.940)">Подсказки:
- Enter = вычислить
- Backspace = удалить
- Esc = очистить
- ^ = степень
- Режим DEG/RAD меняется кнопкой сверху</div>
</div><!--CALC-END-->
</body></html>
